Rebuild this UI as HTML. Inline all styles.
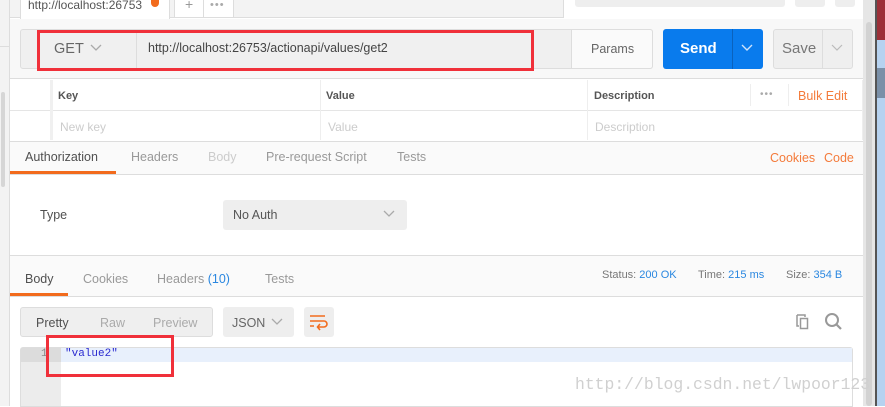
<!DOCTYPE html>
<html><head><style>
*{box-sizing:border-box;margin:0;padding:0}
body{width:885px;height:406px;overflow:hidden;position:relative;background:#fff;font-family:"Liberation Sans",sans-serif;font-size:12px;color:#505050}
.a{position:absolute}
.t{position:absolute;white-space:nowrap}
</style></head><body>
<div class="a" style="left:0;top:0;width:10px;height:406px;background:#f3f3f3;border-right:1px solid #ddd"></div>
<div class="a" style="left:0;top:46px;width:9px;height:1px;background:#ddd"></div>
<div class="a" style="left:1px;top:92px;width:4px;height:95px;background:#d6d6d6;border-radius:2px"></div>
<div class="a" style="left:10px;top:0;width:853px;height:18px;background:#f3f3f3;border-bottom:1px solid #ddd"></div>
<div class="a" style="left:20px;top:0;width:150px;height:19px;background:#fff;border:1px solid #ddd;border-top:none;border-bottom:none;overflow:hidden"><div class="t" style="left:7px;top:-2px;font-size:12px;color:#555">http://localhost:26753</div><div class="a" style="left:120px;top:0;width:30px;height:19px;background:linear-gradient(90deg,rgba(255,255,255,0),#fff 40%)"></div></div>
<div class="a" style="left:151px;top:0;width:8px;height:7px;background:#f26b1d;border-radius:0 0 4px 4px"></div>
<div class="a" style="left:174px;top:0;width:30px;height:18px;background:#fff;border:1px solid #ddd;border-top:none"></div>
<div class="t" style="left:185px;top:-4px;font-size:14px;color:#999">+</div>
<div class="a" style="left:204px;top:0;width:30px;height:18px;background:#fff;border:1px solid #ddd;border-top:none;border-left:none"></div>
<div class="t" style="left:210px;top:-1px;font-size:11px;color:#aaa;letter-spacing:1px">•••</div>
<div class="a" style="left:563px;top:0;width:300px;height:18px;background:#fff;border-left:1px solid #ddd"></div>
<div class="a" style="left:575px;top:0;width:210px;height:7px;background:#eee;border-radius:0 0 3px 3px"></div>
<div class="a" style="left:795px;top:0;width:30px;height:7px;background:#eee;border-radius:0 0 3px 3px"></div>
<div class="a" style="left:835px;top:0;width:20px;height:7px;background:#eee;border-radius:0 0 3px 3px"></div>
<div class="a" style="left:10px;top:19px;width:853px;height:60px;background:#f8f8f8;border-bottom:1px solid #ddd"></div>
<div class="a" style="left:20px;top:29px;width:633px;height:40px;background:#f0f0f0;border:1px solid #ddd;border-radius:3px"></div>
<div class="a" style="left:136px;top:30px;width:1px;height:38px;background:#ddd"></div>
<div class="a" style="left:571px;top:29px;width:82px;height:40px;background:#fafafa;border:1px solid #ddd;border-radius:0 3px 3px 0"></div>
<div class="t" style="left:54px;top:41px;font-size:14.5px;color:#666">GET</div>
<svg class="a" style="left:89px;top:43px" width="14" height="10"><path d="M2 2l5 5 5-5" fill="none" stroke="#aaa" stroke-width="1.3"/></svg>
<div class="t" style="left:148px;top:41px;font-size:12.5px;color:#444">http://localhost:26753/actionapi/values/get2</div>
<div class="t" style="left:591px;top:42px;font-size:12.5px;color:#666">Params</div>
<div class="a" style="left:37px;top:30px;width:497px;height:41px;border:3px solid #f0303a"></div>
<div class="a" style="left:663px;top:29px;width:100px;height:40px;background:#097bed;border-radius:3px"></div>
<div class="a" style="left:732px;top:29px;width:1px;height:40px;background:#0a62bd"></div>
<div class="t" style="left:680px;top:40px;font-size:15px;font-weight:bold;color:#fff">Send</div>
<svg class="a" style="left:740px;top:43px" width="14" height="10"><path d="M2 2l5 5 5-5" fill="none" stroke="#cfe3fb" stroke-width="1.4"/></svg>
<div class="a" style="left:773px;top:29px;width:80px;height:40px;background:#efefef;border:1px solid #ddd;border-radius:3px"></div>
<div class="a" style="left:822px;top:30px;width:1px;height:38px;background:#ddd"></div>
<div class="t" style="left:782px;top:40px;font-size:15px;color:#777">Save</div>
<svg class="a" style="left:830px;top:43px" width="14" height="10"><path d="M2 2l5 5 5-5" fill="none" stroke="#bbb" stroke-width="1.2"/></svg>
<div class="a" style="left:10px;top:80px;width:853px;height:61px;background:#fff"></div>
<div class="a" style="left:10px;top:110px;width:853px;height:1px;background:#e5e5e5"></div>
<div class="a" style="left:50px;top:80px;width:3px;height:60px;background:#f0f0f0"></div>
<div class="a" style="left:320px;top:80px;width:1px;height:60px;background:#eee"></div>
<div class="a" style="left:587px;top:80px;width:1px;height:60px;background:#eee"></div>
<div class="a" style="left:750px;top:84px;width:1px;height:22px;background:#eee"></div>
<div class="a" style="left:788px;top:84px;width:1px;height:22px;background:#eee"></div>
<div class="a" style="left:862px;top:80px;width:1px;height:60px;background:#eee"></div>
<div class="t" style="left:58px;top:90px;font-size:11px;font-weight:bold;color:#555">Key</div>
<div class="t" style="left:326px;top:90px;font-size:11px;font-weight:bold;color:#555">Value</div>
<div class="t" style="left:594px;top:90px;font-size:11px;font-weight:bold;color:#555">Description</div>
<div class="t" style="left:760px;top:89px;font-size:10px;color:#aaa;letter-spacing:1px">•••</div>
<div class="t" style="left:798px;top:89px;font-size:12.5px;color:#f47b3b">Bulk Edit</div>
<div class="t" style="left:60px;top:120px;font-size:12px;color:#ccc">New key</div>
<div class="t" style="left:328px;top:120px;font-size:12px;color:#ccc">Value</div>
<div class="t" style="left:595px;top:120px;font-size:12px;color:#ccc">Description</div>
<div class="a" style="left:10px;top:141px;width:853px;height:34px;background:#fafafa;border-top:1px solid #ddd;border-bottom:1px solid #ddd"></div>
<div class="a" style="left:10px;top:171px;width:106px;height:3px;background:#f26b1d"></div>
<div class="t" style="left:25px;top:150px;font-size:12.5px;color:#505050">Authorization</div>
<div class="t" style="left:131px;top:150px;font-size:12.5px;color:#999">Headers</div>
<div class="t" style="left:208px;top:150px;font-size:12.5px;color:#ccc">Body</div>
<div class="t" style="left:266px;top:150px;font-size:12.5px;color:#999">Pre-request Script</div>
<div class="t" style="left:397px;top:150px;font-size:12.5px;color:#999">Tests</div>
<div class="t" style="left:770px;top:151px;font-size:12.5px;color:#f47b3b">Cookies</div>
<div class="t" style="left:824px;top:151px;font-size:12.5px;color:#f47b3b">Code</div>
<div class="t" style="left:40px;top:208px;font-size:12.5px;color:#505050">Type</div>
<div class="a" style="left:223px;top:200px;width:184px;height:30px;background:#eee;border-radius:3px"></div>
<div class="t" style="left:233px;top:208px;font-size:12.5px;color:#555">No Auth</div>
<svg class="a" style="left:382px;top:209px" width="14" height="10"><path d="M2 2l5 5 5-5" fill="none" stroke="#aaa" stroke-width="1.3"/></svg>
<div class="a" style="left:10px;top:255px;width:853px;height:42px;background:#fafafa;border-top:1px solid #ddd;border-bottom:1px solid #ddd"></div>
<div class="a" style="left:10px;top:293px;width:58px;height:3px;background:#f26b1d"></div>
<div class="t" style="left:25px;top:272px;font-size:12.5px;color:#505050">Body</div>
<div class="t" style="left:83px;top:272px;font-size:12.5px;color:#999">Cookies</div>
<div class="t" style="left:157px;top:272px;font-size:12.5px;color:#999">Headers <span style="color:#2a87e0">(10)</span></div>
<div class="t" style="left:265px;top:272px;font-size:12.5px;color:#999">Tests</div>
<div class="t" style="left:602px;top:269px;font-size:11px;color:#777">Status: <span style="color:#2a87e0">200 OK</span></div>
<div class="t" style="left:698px;top:269px;font-size:11px;color:#777">Time: <span style="color:#2a87e0">215 ms</span></div>
<div class="t" style="left:786px;top:269px;font-size:11px;color:#777">Size: <span style="color:#2a87e0">354 B</span></div>
<div class="a" style="left:20px;top:307px;width:193px;height:30px;background:#efefef;border:1px solid #ddd;border-radius:3px"></div>
<div class="t" style="left:36px;top:316px;font-size:12.5px;color:#505050">Pretty</div>
<div class="t" style="left:100px;top:316px;font-size:12.5px;color:#aaa">Raw</div>
<div class="t" style="left:153px;top:316px;font-size:12.5px;color:#aaa">Preview</div>
<div class="a" style="left:223px;top:307px;width:71px;height:30px;background:#eee;border-radius:3px"></div>
<div class="t" style="left:232px;top:316px;font-size:12.5px;color:#666">JSON</div>
<svg class="a" style="left:270px;top:317px" width="14" height="10"><path d="M2 2l5 5 5-5" fill="none" stroke="#aaa" stroke-width="1.3"/></svg>
<div class="a" style="left:304px;top:307px;width:30px;height:30px;background:#eee;border-radius:3px"></div>
<svg class="a" style="left:309px;top:313px" width="20" height="18"><path d="M1 3h15M1 8h14a3 3 0 0 1 0 6h-6M1 13h4M11 11l-2.5 3 2.5 3" fill="none" stroke="#f26b1d" stroke-width="1.6"/></svg>
<svg class="a" style="left:795px;top:313px" width="18" height="18"><path d="M2 2h8v2M2 2v11h2" fill="none" stroke="#999" stroke-width="1.5"/><rect x="5.5" y="5.5" width="7" height="10" fill="none" stroke="#999" stroke-width="1.5"/></svg>
<svg class="a" style="left:824px;top:312px" width="20" height="20"><circle cx="8" cy="8" r="6" fill="none" stroke="#999" stroke-width="2"/><path d="M12.5 12.5l4.5 4.5" stroke="#999" stroke-width="2.2"/></svg>
<div class="a" style="left:20px;top:347px;width:833px;height:60px;border:1px solid #ddd;border-radius:3px 3px 0 0;background:#fff"></div>
<div class="a" style="left:21px;top:348px;width:40px;height:58px;background:#ececec"></div>
<div class="a" style="left:61px;top:348px;width:791px;height:14px;background:#e8f0fc"></div>
<div class="a" style="left:21px;top:348px;width:40px;height:14px;background:#dcdcdc"></div>
<div class="t" style="left:41px;top:348px;font-family:'Liberation Mono',monospace;font-size:11px;color:#888">1</div>
<div class="t" style="left:65px;top:348px;font-family:'Liberation Mono',monospace;font-size:11px;color:#2a2ad0">"value2"</div>
<div class="a" style="left:46px;top:335px;width:128px;height:42px;border:3px solid #f0303a"></div>
<div class="a" style="left:863px;top:0;width:12px;height:406px;background:#e6e6e6"></div>
<div class="a" style="left:866px;top:22px;width:6px;height:384px;background:#d2d2d2;border-radius:3px"></div>
<div class="a" style="left:875px;top:0;width:2px;height:406px;background:#555"></div>
<div class="a" style="left:877px;top:0;width:8px;height:406px;background:#b6d2f0"></div>
<div class="a" style="left:877px;top:0;width:8px;height:40px;background:#9c3038"></div>
<div class="a" style="left:877px;top:68px;width:8px;height:30px;background:#7b90a8"></div>
<div class="t" style="left:575px;top:375px;font-family:'Liberation Mono',monospace;font-size:16.4px;color:#d0d0d0">http://blog.csdn.net/lwpoor123</div>
</body></html>
